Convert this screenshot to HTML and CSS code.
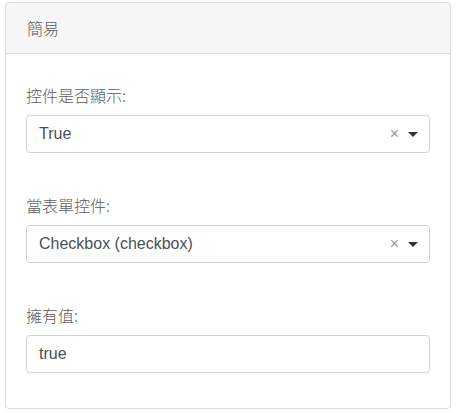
FILE: index.html
```html
<!DOCTYPE html>
<html lang="zh-Hant">
<head>
<meta charset="utf-8">
<link rel="stylesheet" href="styles.css">
</head>
<body>
<div class="card">
  <div class="card-header">簡易</div>
  <div class="card-body">
    <div class="group">
      <label class="label">控件是否顯示:</label>
      <div class="select">
        <span class="value">True</span>
        <span class="clear">×</span>
        <span class="arrow"></span>
      </div>
    </div>
    <div class="group">
      <label class="label">當表單控件:</label>
      <div class="select">
        <span class="value">Checkbox (checkbox)</span>
        <span class="clear">×</span>
        <span class="arrow"></span>
      </div>
    </div>
    <div class="group last">
      <label class="label">擁有值:</label>
      <div class="input">true</div>
    </div>
  </div>
</div>
</body>
</html>
```
FILE: styles.css
```css
* { box-sizing: border-box; }
html, body { margin: 0; padding: 0; background: #fff; }
body {
  padding: 2px 8px 0 5px;
  font-family: "Liberation Sans", Arial, "Noto Sans CJK TC", sans-serif;
  font-size: 16px;
  line-height: 24px;
  color: #212529;
}
.card {
  width: 446px;
  border: 1px solid #dcdcdf;
  border-radius: 4px;
  overflow: hidden;
}
.card-header {
  background: #f7f7f7;
  border-bottom: 1px solid #dcdcdf;
  padding: 13px 21px;
  color: #5c5c5c;
  font-family: "Noto Sans CJK TC", sans-serif;
  font-weight: 300;
  font-size: 16px;
  line-height: 24px;
}
.card-body {
  padding: 29px 20px 35px;
}
.group { margin-bottom: 40px; }
.group.last { margin-bottom: 0; }
.label {
  display: block;
  margin-bottom: 8px;
  color: #5c5c5c;
  font-family: "Noto Sans CJK TC", sans-serif;
  font-weight: 300;
  font-size: 16px;
  line-height: 24px;
}
.select, .input {
  height: 38px;
  border: 1px solid #ced4da;
  border-radius: 4px;
  padding: 0 12px;
  display: flex;
  align-items: center;
  color: #495057;
  font-size: 16px;
}
.value { flex: 1; }
.clear {
  color: #999;
  font-size: 16px;
  margin-right: 9px;
  line-height: 1;
}
.arrow {
  width: 0;
  height: 0;
  border-left: 5px solid transparent;
  border-right: 5px solid transparent;
  border-top: 5px solid #333;
  margin-right: -1px;
}
```
